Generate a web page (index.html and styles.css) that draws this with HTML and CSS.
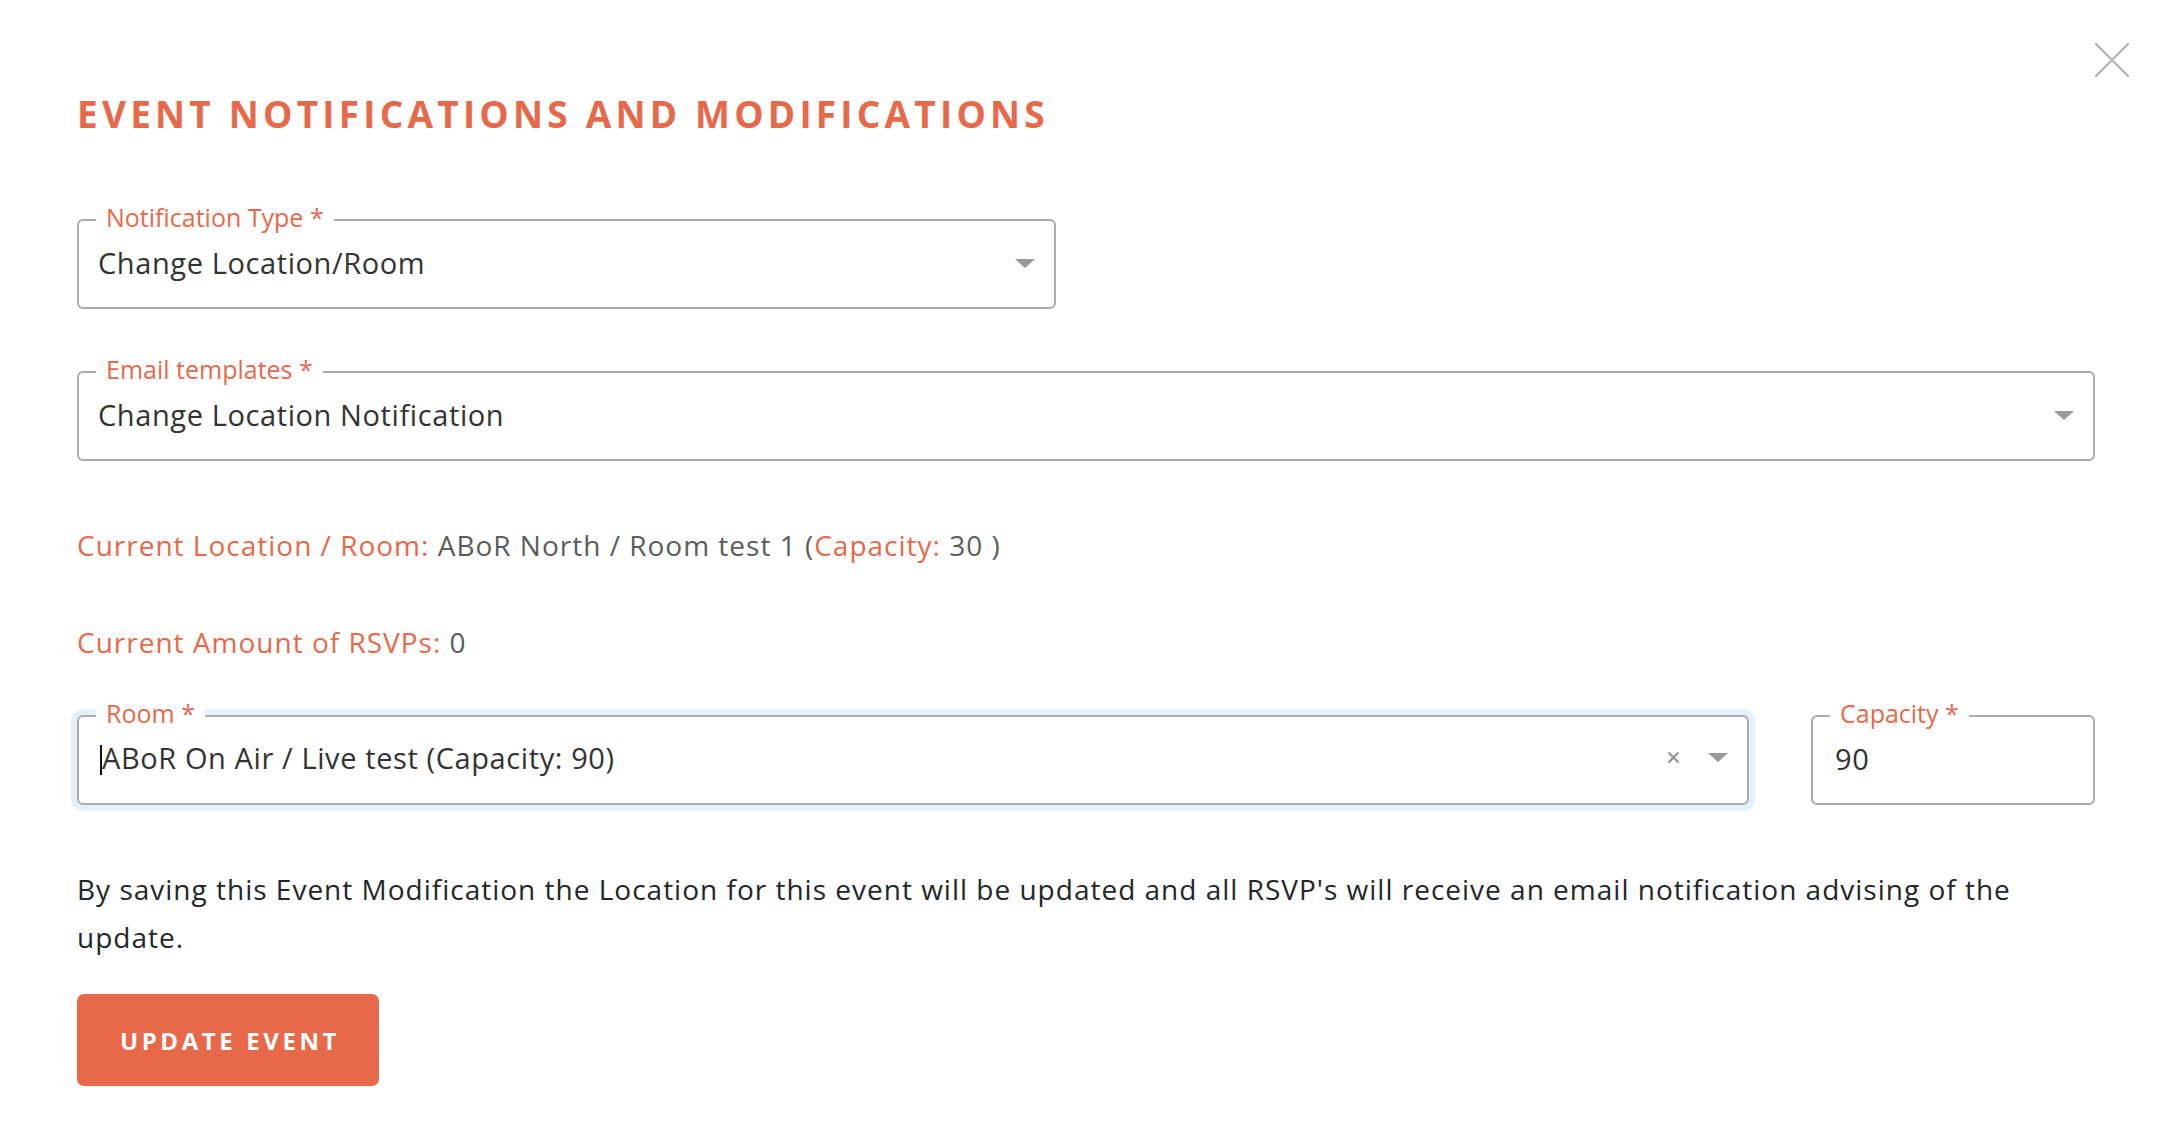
FILE: index.html
```html
<!DOCTYPE html>
<html lang="en">
<head>
<meta charset="utf-8">
<title>Event Notifications and Modifications</title>
<link rel="stylesheet" href="styles.css">
</head>
<body>
<div class="modal">
  <button class="close" aria-label="Close">
    <svg viewBox="0 0 34 34" width="34" height="34"><path d="M1 1 L33 33 M33 1 L1 33" stroke="#b3b8b1" stroke-width="2.2" fill="none" stroke-linecap="round"/></svg>
  </button>

  <h1 class="title">EVENT NOTIFICATIONS AND MODIFICATIONS</h1>

  <div class="field field--nt">
    <span class="field-label">Notification Type *</span>
    <span class="field-value">Change Location/Room</span>
    <svg class="caret" viewBox="0 0 20 9" width="20" height="9"><polygon points="0,0 20,0 10,9" fill="#999"/></svg>
  </div>

  <div class="field field--email">
    <span class="field-label">Email templates *</span>
    <span class="field-value">Change Location Notification</span>
    <svg class="caret" viewBox="0 0 20 9" width="20" height="9"><polygon points="0,0 20,0 10,9" fill="#999"/></svg>
  </div>

  <p class="info"><span class="accent">Current Location / Room:</span> ABoR North / Room test 1 (<span class="accent">Capacity:</span> 30 )</p>
  <p class="info info--second"><span class="accent">Current Amount of RSVPs:</span> 0</p>

  <div class="row">
    <div class="field field--room">
      <span class="field-label">Room *</span>
      <span class="field-value"><span class="cursor"></span>ABoR On Air / Live test (Capacity: 90)</span>
      <svg class="clear" viewBox="0 0 13 13" width="13" height="13"><path d="M1.5 1.5 L11.5 11.5 M11.5 1.5 L1.5 11.5" stroke="#999" stroke-width="2.4" fill="none"/></svg>
      <svg class="caret" viewBox="0 0 20 9" width="20" height="9"><polygon points="0,0 20,0 10,9" fill="#999"/></svg>
    </div>
    <div class="field field--capacity">
      <span class="field-label">Capacity *</span>
      <span class="field-value">90</span>
    </div>
  </div>

  <p class="note">By saving this Event Modification the Location for this event will be updated and all RSVP's will receive an email notification advising of the update.</p>

  <button class="btn">UPDATE EVENT</button>
</div>
</body>
</html>
```

FILE: styles.css
```css
body {
  margin: 0;
  background: #ffffff;
  font-family: "Open Sans", "Noto Sans", sans-serif;
}

.modal {
  position: relative;
  padding: 92px 77px 0;
}

.close {
  position: absolute;
  top: 43px;
  right: 43px;
  width: 34px;
  height: 34px;
  padding: 0;
  border: 0;
  background: none;
}

.close svg {
  display: block;
}

.title {
  margin: 0;
  font-size: 37px;
  line-height: 44px;
  font-weight: 700;
  letter-spacing: 4.2px;
  color: #e8694a;
}

.field {
  position: relative;
  box-sizing: border-box;
  height: 90px;
  border: 2px solid #a9aeac;
  border-radius: 6px;
  display: flex;
  align-items: center;
  padding: 0 19px 2px 19px;
  background: #fff;
}

.field--nt {
  width: 979px;
  margin-top: 83px;
}

.field--email {
  margin-top: 62px;
}

.field-label {
  position: absolute;
  top: -19px;
  left: 17px;
  padding: 0 10px;
  background: #fff;
  font-size: 25px;
  line-height: 30px;
  color: #e8694a;
  white-space: nowrap;
}

.field-value {
  flex: 1;
  font-size: 29px;
  line-height: 36px;
  letter-spacing: 0.6px;
  color: #333333;
  white-space: nowrap;
}

.caret {
  display: block;
  flex: none;
}

.clear {
  display: block;
  flex: none;
  margin-right: 28px;
}

.info {
  margin: 64px 0 0;
  font-size: 28px;
  line-height: 40px;
  letter-spacing: 1px;
  color: #5a5e5b;
}

.info--second {
  margin-top: 57px;
}

.accent {
  color: #e8694a;
}

.row {
  display: flex;
  gap: 62px;
  margin-top: 53px;
}

.field--room {
  flex: 1;
  padding-left: 21px;
  padding-bottom: 5px;
  box-shadow: 0 0 0 6px #e4f0fc;
}

.cursor {
  display: inline-block;
  width: 2px;
  height: 30px;
  background: #111;
  vertical-align: -6px;
}

.field--capacity {
  width: 284px;
  flex: none;
  padding-left: 22px;
}

.note {
  margin: 60px 0 0;
  font-size: 28px;
  line-height: 48px;
  letter-spacing: 1px;
  color: #23272a;
}

.btn {
  display: block;
  margin-top: 33px;
  width: 302px;
  height: 92px;
  padding: 0 0 0 4px;
  border: 0;
  border-radius: 7px;
  background: #e8694a;
  color: #ffffff;
  font-family: inherit;
  font-size: 24px;
  font-weight: 700;
  letter-spacing: 3.6px;
}
```
